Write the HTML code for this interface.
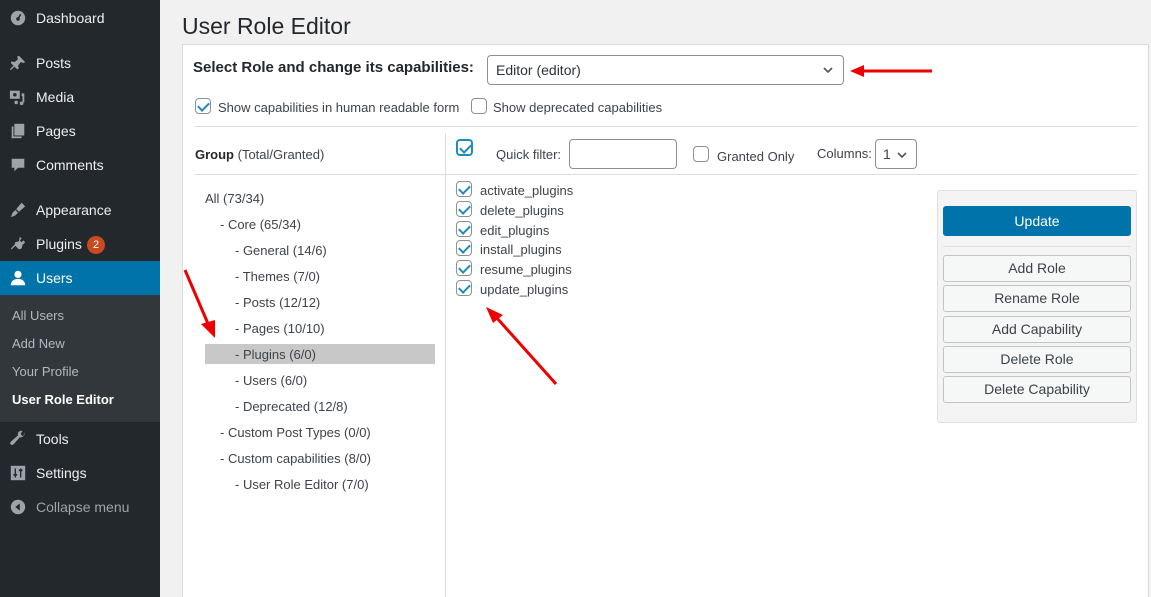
<!DOCTYPE html>
<html style="width:1151px;height:597px;overflow:hidden"><head><style>
*{margin:0;padding:0;box-sizing:border-box}
body{width:1151px;height:597px;overflow:hidden;background:#f1f1f1;font-family:"Liberation Sans",sans-serif;font-size:13px;color:#3c434a;position:relative}
.a{position:absolute;white-space:nowrap}
#side{position:absolute;left:0;top:0;width:160px;height:597px;background:#23282d}
.mi{position:absolute;left:36px;color:#eee;font-size:14px}
.ic{position:absolute;left:9px;width:18px;height:18px}
.sub{position:absolute;left:12px;color:#b4b9be;font-size:13px}
.cb{position:absolute;width:16px;height:16px;border:1px solid #8c8f94;border-radius:4px;background:#fff}
.cb.on::after{content:"";position:absolute;left:4px;top:1px;width:5px;height:9px;border:solid #1e8cbe;border-width:0 2px 2px 0;transform:rotate(45deg)}
.btn{position:absolute;left:943px;width:188px;height:27px;border:1px solid #c3c4c7;border-radius:3px;background:#f6f7f7;text-align:center;line-height:25px;font-size:14px;color:#3c434a}
</style></head><body>
<div id="side">
 <svg class="ic" style="top:9px" viewBox="0 0 20 20"><circle cx="10" cy="10" r="8" fill="#9ea3a8"/><circle cx="10" cy="11" r="2" fill="#23282d"/><rect x="9.2" y="5" width="1.6" height="6" fill="#23282d" transform="rotate(30 10 11)"/></svg>
 <div class="mi" style="top:10px">Dashboard</div>
 <svg class="ic" style="top:54px" viewBox="0 0 20 20"><path d="M11 2l7 7-2 1-3-1-3 4 1 3-2 1-3-3-4 4-1-1 4-4-3-3 1-2 3 1 4-3-1-3z" fill="#9ea3a8"/></svg>
 <div class="mi" style="top:55px">Posts</div>
 <svg class="ic" style="top:88px" viewBox="0 0 20 20"><rect x="1" y="3" width="11" height="9" fill="#9ea3a8"/><circle cx="6.5" cy="7.5" r="2" fill="#23282d"/><path d="M14 6h3v10h-2V9h-1z" fill="#9ea3a8"/><circle cx="8" cy="16" r="2" fill="#9ea3a8"/><circle cx="14" cy="17" r="2" fill="#9ea3a8"/></svg>
 <div class="mi" style="top:89px">Media</div>
 <svg class="ic" style="top:122px" viewBox="0 0 20 20"><rect x="6" y="2" width="11" height="13" fill="#9ea3a8"/><rect x="3" y="5" width="2" height="13" fill="#9ea3a8"/><rect x="3" y="16" width="11" height="2" fill="#9ea3a8"/></svg>
 <div class="mi" style="top:123px">Pages</div>
 <svg class="ic" style="top:156px" viewBox="0 0 20 20"><path d="M3 3h14v10h-7l-4 4v-4H3z" fill="#9ea3a8"/></svg>
 <div class="mi" style="top:157px">Comments</div>
 <svg class="ic" style="top:201px" viewBox="0 0 20 20"><path d="M14 2l4 4-7 6-3-3zM7 10l3 3-3 3-5 2 2-5z" fill="#9ea3a8"/></svg>
 <div class="mi" style="top:202px">Appearance</div>
 <svg class="ic" style="top:235px" viewBox="0 0 20 20"><path d="M12 2l2 2-2 2 2 2 2-2 2 2-3 3-1 4-3 1-4-4-4 4-1-1 4-4 1-3 4-1z" fill="#9ea3a8"/></svg>
 <div class="mi" style="top:236px">Plugins</div>
 <div class="a" style="left:87px;top:236px;width:18px;height:18px;border-radius:9px;background:#ca4a1f;color:#fff;font-size:11px;text-align:center;line-height:18px">2</div>
 <div class="a" style="left:0;top:261px;width:160px;height:34px;background:#0073aa"></div>
 <svg class="ic" style="top:269px" viewBox="0 0 20 20"><circle cx="10" cy="6" r="4" fill="#fff"/><path d="M2 18c0-5 4-7 8-7s8 2 8 7z" fill="#fff"/></svg>
 <div class="mi" style="top:270px;color:#fff">Users</div>
 <div class="a" style="left:152px;top:270px;width:0;height:0;border:8px solid transparent;border-right-color:#f1f1f1"></div>
 <div class="a" style="left:0;top:295px;width:160px;height:127px;background:#32373c"></div>
 <div class="sub" style="top:308px">All Users</div>
 <div class="sub" style="top:336px">Add New</div>
 <div class="sub" style="top:364px">Your Profile</div>
 <div class="sub" style="top:392px;color:#fff;font-weight:bold">User Role Editor</div>
 <svg class="ic" style="top:430px" viewBox="0 0 20 20"><path d="M17 3a4 4 0 0 1-5 5L5 16a2 2 0 0 1-3-3l8-7a4 4 0 0 1 5-5l-2 3 1 2 2 1z" fill="#9ea3a8"/></svg>
 <div class="mi" style="top:431px">Tools</div>
 <svg class="ic" style="top:464px" viewBox="0 0 20 20"><rect x="2" y="2" width="16" height="16" fill="#9ea3a8"/><path d="M7 5v10M13 5v10" stroke="#23282d" stroke-width="1.5"/><rect x="5" y="11" width="4" height="2" fill="#23282d"/><rect x="11" y="6" width="4" height="2" fill="#23282d"/></svg>
 <div class="mi" style="top:465px">Settings</div>
 <svg class="ic" style="top:498px" viewBox="0 0 20 20"><circle cx="10" cy="10" r="8" fill="#9ea3a8"/><path d="M12 6v8l-5-4z" fill="#23282d"/></svg>
 <div class="mi" style="top:499px;color:#9ea3a8">Collapse menu</div>
</div>

<div class="a" style="left:182px;top:13px;font-size:23px;color:#23282d">User Role Editor</div>
<div class="a" style="left:182px;top:44px;width:967px;height:553px;background:#fff;border:1px solid #dcdcde;border-bottom:none"></div>
<div class="a" style="left:193px;top:59px;font-size:15px;font-weight:bold;color:#23282d">Select Role and change its capabilities:</div>
<div class="a" style="left:487px;top:55px;width:357px;height:30px;border:1px solid #8c8f94;border-radius:4px;padding:6px 8px;font-size:14px;color:#2c3338">Editor (editor)</div>
<svg class="a" style="left:822px;top:65px" width="12" height="10" viewBox="0 0 12 10"><path d="M2 3l4 4 4-4" stroke="#50575e" stroke-width="1.6" fill="none"/></svg>
<svg class="a" style="left:848px;top:64px" width="86" height="14"><path d="M84 7H14" stroke="#e00" stroke-width="3"/><path d="M2 7l14-6v12z" fill="#e00"/></svg>
<div class="cb on" style="left:195px;top:98px"></div>
<div class="a" style="left:218px;top:100px">Show capabilities in human readable form</div>
<div class="cb" style="left:471px;top:98px"></div>
<div class="a" style="left:493px;top:100px">Show deprecated capabilities</div>
<div class="a" style="left:195px;top:126px;width:942px;height:1px;background:#dcdcde"></div>
<div class="a" style="left:195px;top:174px;width:942px;height:1px;background:#dcdcde"></div>
<div class="a" style="left:445px;top:134px;width:1px;height:470px;background:#dcdcde"></div>
<div class="a" style="left:195px;top:147px"><b style="color:#23282d">Group</b> (Total/Granted)</div>
<div class="cb on" style="left:456px;top:139px;border:2px solid #1e8cbe;width:17px;height:17px"></div>
<div class="a" style="left:496px;top:147px">Quick filter:</div>
<div class="a" style="left:569px;top:139px;width:108px;height:30px;border:1px solid #8c8f94;border-radius:4px"></div>
<div class="cb" style="left:693px;top:146px"></div>
<div class="a" style="left:717px;top:149px">Granted Only</div>
<div class="a" style="left:817px;top:146px">Columns:</div>
<div class="a" style="left:875px;top:139px;width:42px;height:30px;border:1px solid #8c8f94;border-radius:4px;padding:6px 7px;font-size:14px">1</div>
<svg class="a" style="left:896px;top:150px" width="12" height="10" viewBox="0 0 12 10"><path d="M2 3l4 4 4-4" stroke="#50575e" stroke-width="1.6" fill="none"/></svg>

<div class="a" style="left:205px;top:191px">All (73/34)</div>
<div class="a" style="left:220px;top:217px">- Core (65/34)</div>
<div class="a" style="left:235px;top:243px">- General (14/6)</div>
<div class="a" style="left:235px;top:269px">- Themes (7/0)</div>
<div class="a" style="left:235px;top:295px">- Posts (12/12)</div>
<div class="a" style="left:235px;top:321px">- Pages (10/10)</div>
<div class="a" style="left:205px;top:344px;width:230px;height:20px;background:#c8c8c8"></div>
<div class="a" style="left:235px;top:347px">- Plugins (6/0)</div>
<div class="a" style="left:235px;top:373px">- Users (6/0)</div>
<div class="a" style="left:235px;top:399px">- Deprecated (12/8)</div>
<div class="a" style="left:220px;top:425px">- Custom Post Types (0/0)</div>
<div class="a" style="left:220px;top:451px">- Custom capabilities (8/0)</div>
<div class="a" style="left:235px;top:477px">- User Role Editor (7/0)</div>
<svg class="a" style="left:183px;top:268px" width="35" height="72"><path d="M2 2L26 58" stroke="#e00" stroke-width="3"/><path d="M32 70L18 56l14-4z" fill="#e00"/></svg>

<div class="cb on" style="left:456px;top:181px"></div><div class="a" style="left:480px;top:183px">activate_plugins</div>
<div class="cb on" style="left:456px;top:201px"></div><div class="a" style="left:480px;top:203px">delete_plugins</div>
<div class="cb on" style="left:456px;top:221px"></div><div class="a" style="left:480px;top:223px">edit_plugins</div>
<div class="cb on" style="left:456px;top:240px"></div><div class="a" style="left:480px;top:242px">install_plugins</div>
<div class="cb on" style="left:456px;top:260px"></div><div class="a" style="left:480px;top:262px">resume_plugins</div>
<div class="cb on" style="left:456px;top:280px"></div><div class="a" style="left:480px;top:282px">update_plugins</div>
<svg class="a" style="left:484px;top:305px" width="76" height="82"><path d="M72 79L12 12" stroke="#e00" stroke-width="3"/><path d="M2 2l17 8-10 8z" fill="#e00"/></svg>

<div class="a" style="left:937px;top:190px;width:200px;height:233px;background:#f4f4f4;border:1px solid #e0e0e0;border-radius:3px"></div>
<div class="a" style="left:943px;top:206px;width:188px;height:30px;background:#0073aa;border-radius:3px;color:#fff;font-size:14px;text-align:center;line-height:30px">Update</div>
<div class="a" style="left:943px;top:246px;width:188px;height:1px;background:#e0e0e0"></div>
<div class="btn" style="top:255px">Add Role</div>
<div class="btn" style="top:285px">Rename Role</div>
<div class="btn" style="top:316px">Add Capability</div>
<div class="btn" style="top:346px">Delete Role</div>
<div class="btn" style="top:376px">Delete Capability</div>
</body></html>
